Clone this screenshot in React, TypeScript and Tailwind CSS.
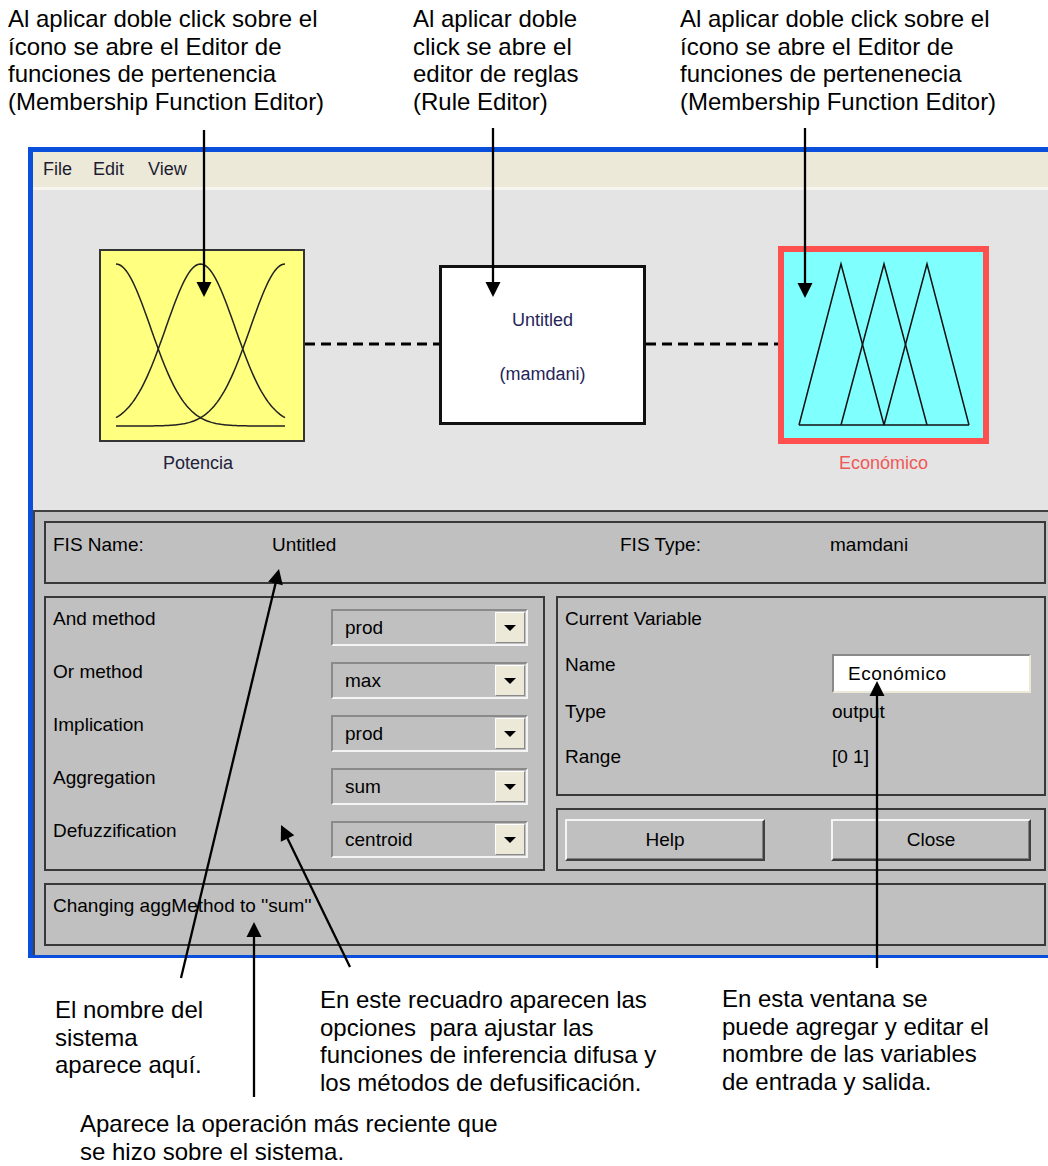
import React from "react";

type Pt = { x1: number; y1: number; x2: number; y2: number };

function Arrow({ x1, y1, x2, y2 }: Pt) {
  const dx = x2 - x1;
  const dy = y2 - y1;
  const L = Math.hypot(dx, dy);
  const ux = dx / L;
  const uy = dy / L;
  const hl = 15;
  const hw = 7.5;
  const bx = x2 - ux * hl;
  const by = y2 - uy * hl;
  const nx = -uy;
  const ny = ux;
  return (
    <g>
      <line x1={x1} y1={y1} x2={bx + ux * 2} y2={by + uy * 2} stroke="#000" strokeWidth={2.3} />
      <polygon
        points={`${x2},${y2} ${bx + nx * hw},${by + ny * hw} ${bx - nx * hw},${by - ny * hw}`}
        fill="#000"
      />
    </g>
  );
}

function gaussPath(mu: number) {
  const s = 0.205;
  const pts: string[] = [];
  for (let i = 0; i <= 100; i++) {
    const t = i / 100;
    const v = Math.exp(-((t - mu) * (t - mu)) / (2 * s * s));
    const X = 17 + t * 169;
    const Y = 177 - v * 162;
    pts.push(`${i === 0 ? "M" : "L"}${X.toFixed(2)},${Y.toFixed(2)}`);
  }
  return pts.join(" ");
}

function YellowIcon() {
  return (
    <svg width={206} height={193} viewBox="0 0 206 193" className="block">
      <rect x={1} y={1} width={204} height={191} fill="#FFFF80" stroke="#333" strokeWidth={2} />
      {[0, 0.5, 1].map((m) => (
        <path key={m} d={gaussPath(m)} fill="none" stroke="#222" strokeWidth={1.5} />
      ))}
    </svg>
  );
}

function CyanIcon() {
  return (
    <svg width={211} height={198} viewBox="0 0 211 198" className="block">
      <rect x={3} y={3} width={205} height={192} fill="#80FFFF" stroke="#FF5050" strokeWidth={6} />
      <polyline points="21,179 63,18 106,179" fill="none" stroke="#111" strokeWidth={1.5} />
      <polyline points="63,179 106,18 149,179" fill="none" stroke="#111" strokeWidth={1.5} />
      <polyline points="106,179 149,18 191,179" fill="none" stroke="#111" strokeWidth={1.5} />
      <line x1={21} y1={179} x2={191} y2={179} stroke="#111" strokeWidth={1.5} />
    </svg>
  );
}

function Dash({ w }: { w: number }) {
  return (
    <svg width={w} height={6} className="block -mt-[2px]">
      <line x1={0} y1={3} x2={w} y2={3} stroke="#000" strokeWidth={3} strokeDasharray="10 6" />
    </svg>
  );
}

function Dropdown({ v }: { v: string }) {
  return (
    <div className="w-[197px] h-[37px] mt-[1px] flex items-center bg-[#C0C0C0] border-2 border-t-[#8a8a8a] border-l-[#8a8a8a] border-b-[#f4f4f4] border-r-[#f4f4f4]">
      <span className="flex-1 pl-[12px] leading-[22px] text-black">{v}</span>
      <div className="w-[30px] h-[31px] mr-[1px] bg-[#ECE9D8] border border-t-white border-l-white border-b-[#8a8a8a] border-r-[#8a8a8a] flex items-center justify-center">
        <svg width={12} height={8} viewBox="0 0 12 8">
          <polygon points="0,1 12,1 6,7" fill="#000" />
        </svg>
      </div>
    </div>
  );
}

function Btn({ label }: { label: string }) {
  return (
    <div className="w-[200px] h-[42px] flex items-center justify-center bg-[#C0C0C0] border-2 border-t-[#f4f4f4] border-l-[#f4f4f4] border-b-[#404040] border-r-[#404040] shadow-[inset_-1px_-1px_0_#808080] leading-[22px] text-black">
      {label}
    </div>
  );
}

export default function App() {
  const methods: [string, string][] = [
    ["And method", "prod"],
    ["Or method", "max"],
    ["Implication", "prod"],
    ["Aggregation", "sum"],
    ["Defuzzification", "centroid"],
  ];
  return (
    <div className="relative w-[1048px] h-[1166px] overflow-hidden bg-white text-black font-['Liberation_Sans',Arial,sans-serif]">
      {/* top annotations */}
      <div className="flex h-[147px] pt-[5px] text-[24px] leading-[27.6px]">
        <div className="w-[413px] pl-[8px]">
          Al aplicar doble click sobre el
          <br />
          ícono se abre el Editor de
          <br />
          funciones de pertenencia
          <br />
          (Membership Function Editor)
        </div>
        <div className="w-[267px]">
          Al aplicar doble
          <br />
          click se abre el
          <br />
          editor de reglas
          <br />
          (Rule Editor)
        </div>
        <div>
          Al aplicar doble click sobre el
          <br />
          ícono se abre el Editor de
          <br />
          funciones de pertenenecia
          <br />
          (Membership Function Editor)
        </div>
      </div>

      {/* window */}
      <div className="ml-[28px] w-[1020px] h-[811px] border-l-[5px] border-t-[5px] border-b-[3px] border-[#0a4fdc] flex flex-col">
        {/* menu */}
        <div className="h-[35px] bg-[#ECE9D8] flex items-center pl-[10px] text-[18px] text-[#1c1c30]">
          <span>File</span>
          <span className="ml-[21px]">Edit</span>
          <span className="ml-[24px]">View</span>
        </div>
        <div className="h-[3px] bg-[#F6F5F0]" />
        {/* canvas */}
        <div className="h-[320px] bg-[#E4E4E4] flex items-center pl-[66px] pb-[10px] text-[18px]">
          <div className="relative w-[206px] h-[193px]">
            <YellowIcon />
            <div className="absolute top-[203px] left-[-8px] right-0 text-center leading-[22px] text-[#222238]">
              Potencia
            </div>
          </div>
          <Dash w={134} />
          <div className="w-[207px] h-[160px] border-[3px] border-[#111] bg-white flex flex-col items-center pt-[41px] text-[#25255a]">
            <span className="leading-[22px]">Untitled</span>
            <span className="leading-[22px] mt-[32px]">(mamdani)</span>
          </div>
          <Dash w={132} />
          <div className="relative w-[211px] h-[198px]">
            <CyanIcon />
            <div className="absolute top-[206px] left-0 right-0 text-center leading-[22px] text-[#F05858]">
              Económico
            </div>
          </div>
        </div>

        {/* lower panel */}
        <div className="flex-1 bg-[#C0C0C0] border-t-2 border-l-2 border-[#404040] pt-[9px] pl-[9px] pr-[2px] text-[19px] leading-[22px]">
          <div className="h-[63px] border-2 border-[#383838] flex pt-[11px] pl-[7px]">
            <span className="w-[219px]">FIS Name:</span>
            <span className="w-[348px]">Untitled</span>
            <span className="w-[210px]">FIS Type:</span>
            <span>mamdani</span>
          </div>
          <div className="mt-[12px] flex gap-[11px]">
            <div className="w-[501px] h-[275px] border-2 border-[#383838] pt-[10px] pl-[7px]">
              {methods.map(([l, v]) => (
                <div key={l} className="h-[53px] flex items-start">
                  <span className="w-[278px]">{l}</span>
                  <Dropdown v={v} />
                </div>
              ))}
            </div>
            <div className="w-[490px] flex flex-col">
              <div className="h-[200px] border-2 border-[#383838] pt-[10px] pl-[7px]">
                <div className="h-[46px]">Current Variable</div>
                <div className="h-[47px] flex items-start">
                  <span className="w-[267px]">Name</span>
                  <div className="w-[199px] h-[39px] flex items-center bg-white border-2 border-t-[#8a8a8a] border-l-[#8a8a8a] border-b-[#ECE9D8] border-r-[#ECE9D8] pl-[14px] tracking-[0.5px]">
                    Económico
                  </div>
                </div>
                <div className="h-[45px] flex">
                  <span className="w-[267px]">Type</span>
                  <span>output</span>
                </div>
                <div className="flex">
                  <span className="w-[267px]">Range</span>
                  <span>[0 1]</span>
                </div>
              </div>
              <div className="mt-[12px] h-[63px] border-2 border-[#383838] flex items-center pl-[7px] gap-[66px]">
                <Btn label="Help" />
                <Btn label="Close" />
              </div>
            </div>
          </div>
          <div className="mt-[12px] h-[63px] border-2 border-[#383838] pt-[10px] pl-[7px]">
            Changing aggMethod to ''sum''
          </div>
        </div>
      </div>

      {/* bottom annotations */}
      <div className="flex h-[152px] text-[24px] leading-[27.6px]">
        <div className="w-[320px] pl-[55px] pt-[38px]">
          El nombre del
          <br />
          sistema
          <br />
          aparece aquí.
        </div>
        <div className="w-[402px] pt-[28px] whitespace-pre">
          {"En este recuadro aparecen las\nopciones  para ajustar las\nfunciones de inferencia difusa y\nlos métodos de defusificación."}
        </div>
        <div className="pt-[27px]">
          En esta ventana se
          <br />
          puede agregar y editar el
          <br />
          nombre de las variables
          <br />
          de entrada y salida.
        </div>
      </div>
      <div className="pl-[80px] text-[24px] leading-[27.6px]">
        Aparece la operación más reciente que
        <br />
        se hizo sobre el sistema.
      </div>

      {/* arrows overlay */}
      <svg
        className="absolute left-0 top-0 pointer-events-none"
        width={1048}
        height={1166}
        viewBox="0 0 1048 1166"
      >
        <Arrow x1={204} y1={130} x2={204} y2={297} />
        <Arrow x1={493} y1={128} x2={493} y2={297} />
        <Arrow x1={805} y1={128} x2={805} y2={298} />
        <Arrow x1={181} y1={978} x2={279} y2={569} />
        <Arrow x1={254} y1={1097} x2={254} y2={922} />
        <Arrow x1={350} y1={967} x2={281} y2={825} />
        <Arrow x1={877} y1={968} x2={877} y2={681} />
      </svg>
    </div>
  );
}
